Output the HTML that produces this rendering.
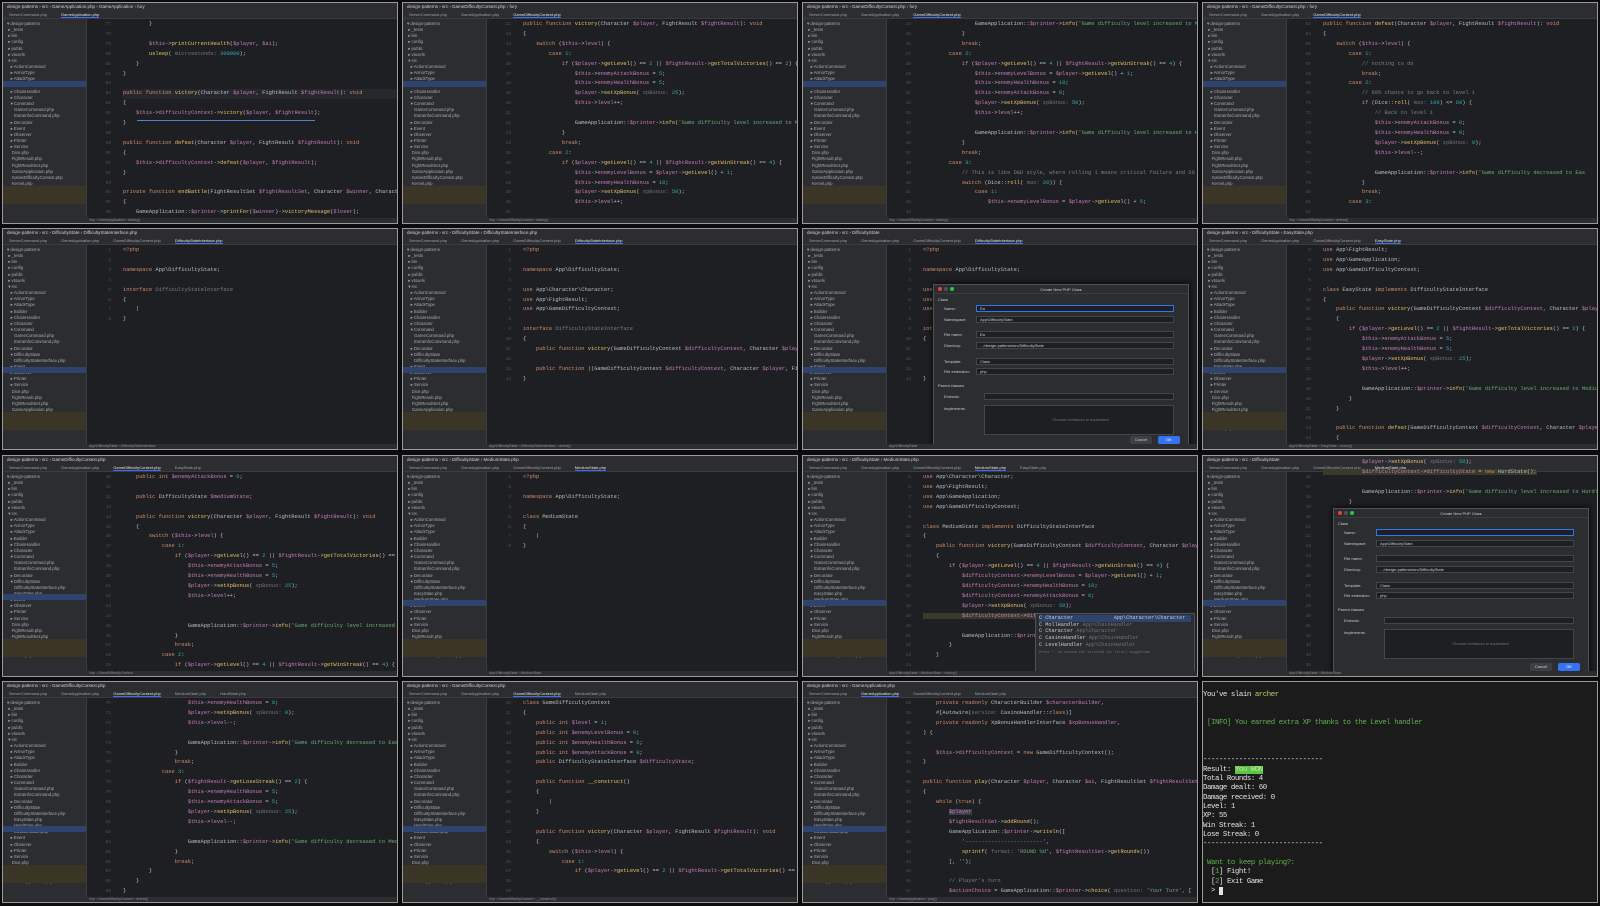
<!DOCTYPE html>
<html><head><meta charset="utf-8"><style>
*{margin:0;padding:0;box-sizing:border-box}
body{width:1600px;height:906px;background:#0c0c0c;position:relative;overflow:hidden;font-family:"Liberation Mono",monospace}
.cell{position:absolute;width:396px;height:222px;border:1px solid #9a9a9a;background:#1e1f22;overflow:hidden}
.tb{position:absolute;left:0;top:0;right:0;height:8px;background:#2b2d30;font:4.5px "Liberation Sans",sans-serif;color:#cfd1d6;padding:1px 0 0 4px;white-space:nowrap}
.tabs{position:absolute;left:0;top:8px;right:0;height:8px;background:#2b2d30;border-bottom:1px solid #393b40;font:4px "Liberation Sans",sans-serif;color:#9da0a8;white-space:nowrap;padding:1px 0 0 6px}
.tabs b{display:inline-block;font-weight:normal;margin-right:14px}
.tabs b.a{border-bottom:1px solid #3574f0;color:#dfe1e5}
.side{position:absolute;left:0;top:16px;width:84px;bottom:5px;background:#2b2d30;border-right:1px solid #393b40;overflow:hidden}
.side pre{font:4.3px/6.15px "Liberation Sans",sans-serif;color:#a9abb0;padding:2px 0 0 4px}
.side .sel{position:absolute;left:0;width:84px;height:6px;background:#2e436e}
.side .ex{position:absolute;left:0;width:84px;height:18px;bottom:14px;background:#3a3524}
.gut{position:absolute;left:86px;top:17px;width:22px;text-align:right}
.gut pre{font:4.5px/9.9px "Liberation Mono",monospace;color:#4e5157}
.ed{position:absolute;left:120px;top:17px;right:0;bottom:5px;overflow:hidden}
.ed pre{font:5.4px/9.9px "Liberation Mono",monospace;color:#bcbec4;white-space:pre}
.sb{position:absolute;left:0;right:0;bottom:0;height:5px;background:#2b2d30;font:3.5px "Liberation Sans",sans-serif;color:#8a8d93;padding-left:86px}
.k{color:#cf8e6d}.f{color:#e6c06b}.v{color:#c77dbb}.s{color:#6aab73}.c{color:#7a7e85}.n{color:#2aacb8}.h{color:#6f737a}
.hl{background:#26282e;display:inline-block;width:300px}
.dlg{position:absolute;background:#2b2d30;border:1px solid #4e5157;box-shadow:0 0 6px #000;font:4px "Liberation Sans",sans-serif;color:#c9cbd0}
.dlg .t{height:9px;text-align:center;line-height:9px;border-bottom:1px solid #393b40}
.dlg .dot{position:absolute;top:2px;width:4px;height:4px;border-radius:2px}
.dlg .row{position:absolute;left:8px;right:8px;height:7px}
.dlg .row i{font-style:normal;position:absolute;left:2px;top:1px}
.dlg .row u{text-decoration:none;position:absolute;left:34px;right:6px;top:0;height:7px;background:#1e1f22;border:1px solid #43454a;padding-left:3px;line-height:6px}
.btn{position:absolute;bottom:4px;height:8px;width:22px;border-radius:2px;text-align:center;line-height:8px}
.term{background:#1b1b1b}
.term pre{position:absolute;left:0;top:9px;font:7.4px/9.33px "Liberation Mono",monospace;letter-spacing:-0.45px;color:#e4e4e4}
</style></head><body>

<!-- ROW 1 -->
<div class="cell" style="left:2px;top:2px">
<div class="tb">design-patterns › src › GameApplication.php › GameApplication › fury</div>
<div class="tabs"><b>ServerCommand.php</b><b class="a">GameApplication.php</b></div>
<div class="side"><div class="sel" style="top:62px"></div><div class="ex"></div><pre>▾ design-patterns
 ▸ _tests
 ▸ bin
 ▸ config
 ▸ public
 ▸ vtoxels
 ▾ src
   ▸ ActionCommand
   ▸ ArmorType
   ▸ AttackType
   ▸ Builder
   ▸ ChainHandler
   ▸ Character
   ▾ Command
      GameCommand.php
      ExtraInfoCommand.php
   ▸ Decorator
   ▸ Event
   ▸ Observer
   ▸ Printer
   ▸ Service
    Dice.php
    FightResult.php
    FightResultSet.php
    GameApplication.php
    GameDifficultyContext.php
    Kernel.php
 ▸ tutorial
 ▸ var
 ▸ vendor
</pre></div>
<div class="gut"><pre>77
78
79
80
81
82
83
84
85
86
87
88
89
90
91
92
93
94
95
96</pre></div>
<div class="ed"><pre>        }

        <span class="v">$this</span>-><span class="f">printCurrentHealth</span>(<span class="v">$player</span>, <span class="v">$ai</span>);
        <span class="f">usleep</span>( <span class="h">microseconds:</span> <span class="n">300000</span>);
    }
}

<span class="hl"><span class="k">public function</span> <span class="f">victory</span>(Character <span class="v">$player</span>, FightResult <span class="v">$fightResult</span>): <span class="k">void</span></span>
{
    <span class="v">$this</span>-><span class="v">difficultyContext</span>-><span class="f">victory</span>(<span class="v">$player</span>, <span class="v">$fightResult</span>);
}

<span class="k">public function</span> <span class="f">defeat</span>(Character <span class="v">$player</span>, FightResult <span class="v">$fightResult</span>): <span class="k">void</span>
{
    <span class="v">$this</span>-><span class="v">difficultyContext</span>-><span class="f">defeat</span>(<span class="v">$player</span>, <span class="v">$fightResult</span>);
}

<span class="k">private function</span> <span class="f">endBattle</span>(FightResultSet <span class="v">$fightResultSet</span>, Character <span class="v">$winner</span>, Character
{
    GameApplication::<span class="v">$printer</span>-><span class="f">printFor</span>(<span class="v">$winner</span>)-><span class="f">victoryMessage</span>(<span class="v">$loser</span>);</pre>
<div style="position:absolute;left:14px;top:100px;width:178px;height:1px;background:#5a7fd0"></div></div>
<div class="sb">Vop › GameApplication › victory()</div>
</div>

<div class="cell" style="left:402px;top:2px">
<div class="tb">design-patterns › src › GameDifficultyContext.php › fury</div>
<div class="tabs"><b>ServerCommand.php</b><b>GameApplication.php</b><b class="a">GameDifficultyContext.php</b></div>
<div class="side"><div class="sel" style="top:62px"></div><div class="ex"></div><pre>▾ design-patterns
 ▸ _tests
 ▸ bin
 ▸ config
 ▸ public
 ▸ vtoxels
 ▾ src
   ▸ ActionCommand
   ▸ ArmorType
   ▸ AttackType
   ▸ Builder
   ▸ ChainHandler
   ▸ Character
   ▾ Command
      GameCommand.php
      ExtraInfoCommand.php
   ▸ Decorator
   ▸ Event
   ▸ Observer
   ▸ Printer
   ▸ Service
    Dice.php
    FightResult.php
    FightResultSet.php
    GameApplication.php
    GameDifficultyContext.php
    Kernel.php
 ▸ tutorial
 ▸ var
 ▸ vendor
</pre></div>
<div class="gut"><pre>12
13
14
15
16
17
18
19
20
21
22
23
24
25
26
27
28
29
30
31</pre></div>
<div class="ed"><pre><span class="k">public function</span> <span class="f">victory</span>(Character <span class="v">$player</span>, FightResult <span class="v">$fightResult</span>): <span class="k">void</span>
{
    <span class="k">switch</span> (<span class="v">$this</span>-><span class="v">level</span>) {
        <span class="k">case</span> <span class="n">1</span>:
            <span class="k">if</span> (<span class="v">$player</span>-><span class="f">getLevel</span>() == <span class="n">2</span> || <span class="v">$fightResult</span>-><span class="f">getTotalVictories</span>() == <span class="n">2</span>) {
                <span class="v">$this</span>-><span class="v">enemyAttackBonus</span> = <span class="n">5</span>;
                <span class="v">$this</span>-><span class="v">enemyHealthBonus</span> = <span class="n">5</span>;
                <span class="v">$player</span>-><span class="f">setXpBonus</span>( <span class="h">xpBonus:</span> <span class="n">25</span>);
                <span class="v">$this</span>-><span class="v">level</span>++;

                GameApplication::<span class="v">$printer</span>-><span class="f">info</span>(<span class="s">'Game difficulty level increased to Med</span>
            }
            <span class="k">break</span>;
        <span class="k">case</span> <span class="n">2</span>:
            <span class="k">if</span> (<span class="v">$player</span>-><span class="f">getLevel</span>() == <span class="n">4</span> || <span class="v">$fightResult</span>-><span class="f">getWinStreak</span>() == <span class="n">4</span>) {
                <span class="v">$this</span>-><span class="v">enemyLevelBonus</span> = <span class="v">$player</span>-><span class="f">getLevel</span>() + <span class="n">1</span>;
                <span class="v">$this</span>-><span class="v">enemyHealthBonus</span> = <span class="n">10</span>;
                <span class="v">$player</span>-><span class="f">setXpBonus</span>( <span class="h">xpBonus:</span> <span class="n">50</span>);
                <span class="v">$this</span>-><span class="v">level</span>++;</pre></div>
<div class="sb">Vop › GameDifficultyContext › victory()</div>
</div>

<div class="cell" style="left:802px;top:2px">
<div class="tb">design-patterns › src › GameDifficultyContext.php › fury</div>
<div class="tabs"><b>ServerCommand.php</b><b>GameApplication.php</b><b class="a">GameDifficultyContext.php</b></div>
<div class="side"><div class="sel" style="top:62px"></div><div class="ex"></div><pre>▾ design-patterns
 ▸ _tests
 ▸ bin
 ▸ config
 ▸ public
 ▸ vtoxels
 ▾ src
   ▸ ActionCommand
   ▸ ArmorType
   ▸ AttackType
   ▸ Builder
   ▸ ChainHandler
   ▸ Character
   ▾ Command
      GameCommand.php
      ExtraInfoCommand.php
   ▸ Decorator
   ▸ Event
   ▸ Observer
   ▸ Printer
   ▸ Service
    Dice.php
    FightResult.php
    FightResultSet.php
    GameApplication.php
    GameDifficultyContext.php
    Kernel.php
 ▸ tutorial
 ▸ var
 ▸ vendor
</pre></div>
<div class="gut"><pre>24
25
26
27
28
29
30
31
32
33
34
35
36
37
38
39
40
41
42
43</pre></div>
<div class="ed"><pre>                GameApplication::<span class="v">$printer</span>-><span class="f">info</span>(<span class="s">'Game difficulty level increased to Med</span>
            }
            <span class="k">break</span>;
        <span class="k">case</span> <span class="n">2</span>:
            <span class="k">if</span> (<span class="v">$player</span>-><span class="f">getLevel</span>() == <span class="n">4</span> || <span class="v">$fightResult</span>-><span class="f">getWinStreak</span>() == <span class="n">4</span>) {
                <span class="v">$this</span>-><span class="v">enemyLevelBonus</span> = <span class="v">$player</span>-><span class="f">getLevel</span>() + <span class="n">1</span>;
                <span class="v">$this</span>-><span class="v">enemyHealthBonus</span> = <span class="n">10</span>;
                <span class="v">$this</span>-><span class="v">enemyAttackBonus</span> = <span class="n">8</span>;
                <span class="v">$player</span>-><span class="f">setXpBonus</span>( <span class="h">xpBonus:</span> <span class="n">50</span>);
                <span class="v">$this</span>-><span class="v">level</span>++;

                GameApplication::<span class="v">$printer</span>-><span class="f">info</span>(<span class="s">'Game difficulty level increased to Har</span>
            }
            <span class="k">break</span>;
        <span class="k">case</span> <span class="n">3</span>:
            <span class="c">// This is like D&amp;D style, where rolling 1 means critical failure and 20 bu</span>
            <span class="k">switch</span> (Dice::<span class="f">roll</span>( <span class="h">max:</span> <span class="n">20</span>)) {
                <span class="k">case</span> <span class="n">1</span>:
                    <span class="v">$this</span>-><span class="v">enemyLevelBonus</span> = <span class="v">$player</span>-><span class="f">getLevel</span>() + <span class="n">5</span>;</pre></div>
<div class="sb">Vop › GameDifficultyContext › victory()</div>
</div>

<div class="cell" style="left:1202px;top:2px">
<div class="tb">design-patterns › src › GameDifficultyContext.php › fury</div>
<div class="tabs"><b>ServerCommand.php</b><b>GameApplication.php</b><b class="a">GameDifficultyContext.php</b></div>
<div class="side"><div class="sel" style="top:62px"></div><div class="ex"></div><pre>▾ design-patterns
 ▸ _tests
 ▸ bin
 ▸ config
 ▸ public
 ▸ vtoxels
 ▾ src
   ▸ ActionCommand
   ▸ ArmorType
   ▸ AttackType
   ▸ Builder
   ▸ ChainHandler
   ▸ Character
   ▾ Command
      GameCommand.php
      ExtraInfoCommand.php
   ▸ Decorator
   ▸ Event
   ▸ Observer
   ▸ Printer
   ▸ Service
    Dice.php
    FightResult.php
    FightResultSet.php
    GameApplication.php
    GameDifficultyContext.php
    Kernel.php
 ▸ tutorial
 ▸ var
 ▸ vendor
</pre></div>
<div class="gut"><pre>63
64
65
66
67
68
69
70
71
72
73
74
75
76
77
78
79
80
81
82</pre></div>
<div class="ed"><pre><span class="k">public function</span> <span class="f">defeat</span>(Character <span class="v">$player</span>, FightResult <span class="v">$fightResult</span>): <span class="k">void</span>
{
    <span class="k">switch</span> (<span class="v">$this</span>-><span class="v">level</span>) {
        <span class="k">case</span> <span class="n">1</span>:
            <span class="c">// nothing to do</span>
            <span class="k">break</span>;
        <span class="k">case</span> <span class="n">2</span>:
            <span class="c">// 60% chance to go back to level 1</span>
            <span class="k">if</span> (Dice::<span class="f">roll</span>( <span class="h">max:</span> <span class="n">100</span>) &lt;= <span class="n">60</span>) {
                <span class="c">// Back to level 1</span>
                <span class="v">$this</span>-><span class="v">enemyAttackBonus</span> = <span class="n">0</span>;
                <span class="v">$this</span>-><span class="v">enemyHealthBonus</span> = <span class="n">0</span>;
                <span class="v">$player</span>-><span class="f">setXpBonus</span>( <span class="h">xpBonus:</span> <span class="n">0</span>);
                <span class="v">$this</span>-><span class="v">level</span>--;

                GameApplication::<span class="v">$printer</span>-><span class="f">info</span>(<span class="s">'Game difficulty decreased to Eas</span>
            }
            <span class="k">break</span>;
        <span class="k">case</span> <span class="n">3</span>:</pre></div>
<div class="sb">Vop › GameDifficultyContext › defeat()</div>
</div>

<!-- ROW 2 -->
<div class="cell" style="left:2px;top:228px">
<div class="tb">design-patterns › src › DifficultyState › DifficultyStateInterface.php</div>
<div class="tabs"><b>ServerCommand.php</b><b>GameApplication.php</b><b>GameDifficultyContext.php</b><b class="a">DifficultyStateInterface.php</b></div>
<div class="side"><div class="sel" style="top:122px"></div><div class="ex"></div><pre>▾ design-patterns
 ▸ _tests
 ▸ bin
 ▸ config
 ▸ public
 ▸ vtoxels
 ▾ src
   ▸ ActionCommand
   ▸ ArmorType
   ▸ AttackType
   ▸ Builder
   ▸ ChainHandler
   ▸ Character
   ▾ Command
      GameCommand.php
      ExtraInfoCommand.php
   ▸ Decorator
   ▾ DifficultyState
      DifficultyStateInterface.php
   ▸ Event
   ▸ Observer
   ▸ Printer
   ▸ Service
    Dice.php
    FightResult.php
    FightResultSet.php
    GameApplication.php
    GameDifficultyContext.php
    Kernel.php
 ▸ tutorial
</pre></div>
<div class="gut"><pre>1
2
3
4
5
6
7
8</pre></div>
<div class="ed"><pre><span class="k">&lt;?php</span>

<span class="k">namespace</span> App\DifficultyState;

<span class="k">interface</span> <span class="c">DifficultyStateInterface</span>
{
    |
}</pre></div>
<div class="sb">App\DifficultyState › DifficultyStateInterface</div>
</div>

<div class="cell" style="left:402px;top:228px">
<div class="tb">design-patterns › src › DifficultyState › DifficultyStateInterface.php</div>
<div class="tabs"><b>ServerCommand.php</b><b>GameApplication.php</b><b>GameDifficultyContext.php</b><b class="a">DifficultyStateInterface.php</b></div>
<div class="side"><div class="sel" style="top:122px"></div><div class="ex"></div><pre>▾ design-patterns
 ▸ _tests
 ▸ bin
 ▸ config
 ▸ public
 ▸ vtoxels
 ▾ src
   ▸ ActionCommand
   ▸ ArmorType
   ▸ AttackType
   ▸ Builder
   ▸ ChainHandler
   ▸ Character
   ▾ Command
      GameCommand.php
      ExtraInfoCommand.php
   ▸ Decorator
   ▾ DifficultyState
      DifficultyStateInterface.php
   ▸ Event
   ▸ Observer
   ▸ Printer
   ▸ Service
    Dice.php
    FightResult.php
    FightResultSet.php
    GameApplication.php
    GameDifficultyContext.php
    Kernel.php
 ▸ tutorial
</pre></div>
<div class="gut"><pre>1
2
3
4
5
6
7
8
9
10
11
12
13
14</pre></div>
<div class="ed"><pre><span class="k">&lt;?php</span>

<span class="k">namespace</span> App\DifficultyState;

<span class="k">use</span> App\Character\Character;
<span class="k">use</span> App\FightResult;
<span class="k">use</span> App\GameDifficultyContext;

<span class="k">interface</span> <span class="c">DifficultyStateInterface</span>
{
    <span class="k">public function</span> <span class="f">victory</span>(GameDifficultyContext <span class="v">$difficultyContext</span>, Character <span class="v">$player</span>, FightResu

    <span class="k">public function</span> |(GameDifficultyContext <span class="v">$difficultyContext</span>, Character <span class="v">$player</span>, FightResul
}</pre></div>
<div class="sb">App\DifficultyState › DifficultyStateInterface › defeat()</div>
</div>

<div class="cell" style="left:802px;top:228px">
<div class="tb">design-patterns › src › DifficultyState</div>
<div class="tabs"><b>ServerCommand.php</b><b>GameApplication.php</b><b>GameDifficultyContext.php</b><b class="a">DifficultyStateInterface.php</b></div>
<div class="side"><div class="sel" style="top:122px"></div><div class="ex"></div><pre>▾ design-patterns
 ▸ _tests
 ▸ bin
 ▸ config
 ▸ public
 ▸ vtoxels
 ▾ src
   ▸ ActionCommand
   ▸ ArmorType
   ▸ AttackType
   ▸ Builder
   ▸ ChainHandler
   ▸ Character
   ▾ Command
      GameCommand.php
      ExtraInfoCommand.php
   ▸ Decorator
   ▾ DifficultyState
      DifficultyStateInterface.php
   ▸ Event
   ▸ Observer
   ▸ Printer
   ▸ Service
    Dice.php
    FightResult.php
    FightResultSet.php
    GameApplication.php
    GameDifficultyContext.php
    Kernel.php
 ▸ tutorial
</pre></div>
<div class="gut"><pre>1
2
3
4
5
6
7
8
9
10
11
12
13
14</pre></div>
<div class="ed"><pre><span class="k">&lt;?php</span>

<span class="k">namespace</span> App\DifficultyState;

<span class="k">use</span> App\Character\Character;
<span class="k">use</span> App\FightResult;
<span class="k">use</span> App\GameDifficultyContext;

<span class="k">interface</span> DifficultyStateInterface
{
    <span class="k">public function</span> <span class="f">victory</span>(...

    <span class="k">public function</span> <span class="f">defeat</span>(...
}</pre></div>
<div class="dlg" style="left:130px;top:55px;width:256px;height:165px">
<div class="dot" style="left:4px;background:#e0443e"></div><div class="dot" style="left:10px;background:#4e5157"></div><div class="dot" style="left:16px;background:#28c840"></div>
<div class="t">Create New PHP Class</div>
<div style="position:absolute;left:4px;top:12px">Class</div>
<div class="row" style="top:20px"><i>Name:</i><u style="border-color:#3574f0">Ea</u></div>
<div class="row" style="top:31px"><i>Namespace:</i><u>App\DifficultyState</u></div>
<div class="row" style="top:46px"><i>File name:</i><u>Ea</u></div>
<div class="row" style="top:57px"><i>Directory:</i><u>.../design-patterns/src/DifficultyState</u></div>
<div class="row" style="top:73px"><i>Template:</i><u>Class</u></div>
<div class="row" style="top:83px"><i>File extension:</i><u>php</u></div>
<div style="position:absolute;left:4px;top:98px">Parent classes</div>
<div class="row" style="top:108px"><i>Extends:</i><u style="left:42px"></u></div>
<div class="row" style="top:120px"><i>Implements:</i><u style="left:42px;height:30px;text-align:center;line-height:28px;color:#6f737a">Choose interfaces to implement</u></div>
<div class="btn" style="right:36px;background:#3c3f44">Cancel</div><div class="btn" style="right:8px;background:#3574f0;color:#fff">OK</div>
</div>
<div class="sb">App\DifficultyState</div>
</div>

<div class="cell" style="left:1202px;top:228px">
<div class="tb">design-patterns › src › DifficultyState › EasyState.php</div>
<div class="tabs"><b>ServerCommand.php</b><b>GameApplication.php</b><b>GameDifficultyContext.php</b><b class="a">EasyState.php</b></div>
<div class="side"><div class="sel" style="top:122px"></div><div class="ex"></div><pre>▾ design-patterns
 ▸ _tests
 ▸ bin
 ▸ config
 ▸ public
 ▸ vtoxels
 ▾ src
   ▸ ActionCommand
   ▸ ArmorType
   ▸ AttackType
   ▸ Builder
   ▸ ChainHandler
   ▸ Character
   ▾ Command
      GameCommand.php
      ExtraInfoCommand.php
   ▸ Decorator
   ▾ DifficultyState
      DifficultyStateInterface.php
      EasyState.php
   ▸ Event
   ▸ Observer
   ▸ Printer
   ▸ Service
    Dice.php
    FightResult.php
    FightResultSet.php
    GameApplication.php
    GameDifficultyContext.php
    Kernel.php
</pre></div>
<div class="gut"><pre>5
6
7
8
9
10
11
12
13
14
15
16
17
18
19
20
21
22
23
24</pre></div>
<div class="ed"><pre><span class="k">use</span> App\FightResult;
<span class="k">use</span> App\GameApplication;
<span class="k">use</span> App\GameDifficultyContext;

<span class="k">class</span> EasyState <span class="k">implements</span> DifficultyStateInterface
{
    <span class="k">public function</span> <span class="f">victory</span>(GameDifficultyContext <span class="v">$difficultyContext</span>, Character <span class="v">$player</span>, Fi
    {
        <span class="k">if</span> (<span class="v">$player</span>-><span class="f">getLevel</span>() == <span class="n">2</span> || <span class="v">$fightResult</span>-><span class="f">getTotalVictories</span>() == <span class="n">2</span>) {
            <span class="v">$this</span>-><span class="v">enemyAttackBonus</span> = <span class="n">5</span>;
            <span class="v">$this</span>-><span class="v">enemyHealthBonus</span> = <span class="n">5</span>;
            <span class="v">$player</span>-><span class="f">setXpBonus</span>( <span class="h">xpBonus:</span> <span class="n">25</span>);
            <span class="v">$this</span>-><span class="v">level</span>++;

            GameApplication::<span class="v">$printer</span>-><span class="f">info</span>(<span class="s">'Game difficulty level increased to Medium!'</span>);
        }
    }

    <span class="k">public function</span> <span class="f">defeat</span>(GameDifficultyContext <span class="v">$difficultyContext</span>, Character <span class="v">$player</span>, F
    {</pre></div>
<div class="sb">App\DifficultyState › EasyState › victory()</div>
</div>

<!-- ROW 3 -->
<div class="cell" style="left:2px;top:455px">
<div class="tb">design-patterns › src › GameDifficultyContext.php</div>
<div class="tabs"><b>ServerCommand.php</b><b>GameApplication.php</b><b class="a">GameDifficultyContext.php</b><b>EasyState.php</b></div>
<div class="side"><div class="sel" style="top:122px"></div><div class="ex"></div><pre>▾ design-patterns
 ▸ _tests
 ▸ bin
 ▸ config
 ▸ public
 ▸ vtoxels
 ▾ src
   ▸ ActionCommand
   ▸ ArmorType
   ▸ AttackType
   ▸ Builder
   ▸ ChainHandler
   ▸ Character
   ▾ Command
      GameCommand.php
      ExtraInfoCommand.php
   ▸ Decorator
   ▾ DifficultyState
      DifficultyStateInterface.php
      EasyState.php
   ▸ Event
   ▸ Observer
   ▸ Printer
   ▸ Service
    Dice.php
    FightResult.php
    FightResultSet.php
    GameApplication.php
    GameDifficultyContext.php
    Kernel.php
</pre></div>
<div class="gut"><pre>10
11
12
13
14
15
16
17
18
19
20
21
22
23
24
25
26
27
28
29</pre></div>
<div class="ed"><pre>    <span class="k">public int</span> <span class="v">$enemyAttackBonus</span> = <span class="n">0</span>;

    <span class="k">public</span> DifficultyState <span class="v">$mediumState</span>;

    <span class="k">public function</span> <span class="f">victory</span>(Character <span class="v">$player</span>, FightResult <span class="v">$fightResult</span>): <span class="k">void</span>
    {
        <span class="k">switch</span> (<span class="v">$this</span>-><span class="v">level</span>) {
            <span class="k">case</span> <span class="n">1</span>:
                <span class="k">if</span> (<span class="v">$player</span>-><span class="f">getLevel</span>() == <span class="n">2</span> || <span class="v">$fightResult</span>-><span class="f">getTotalVictories</span>() == <span class="n">2</span>) {
                    <span class="v">$this</span>-><span class="v">enemyAttackBonus</span> = <span class="n">5</span>;
                    <span class="v">$this</span>-><span class="v">enemyHealthBonus</span> = <span class="n">5</span>;
                    <span class="v">$player</span>-><span class="f">setXpBonus</span>( <span class="h">xpBonus:</span> <span class="n">25</span>);
                    <span class="v">$this</span>-><span class="v">level</span>++;


                    GameApplication::<span class="v">$printer</span>-><span class="f">info</span>(<span class="s">'Game difficulty level increased to Med</span>
                }
                <span class="k">break</span>;
            <span class="k">case</span> <span class="n">2</span>:
                <span class="k">if</span> (<span class="v">$player</span>-><span class="f">getLevel</span>() == <span class="n">4</span> || <span class="v">$fightResult</span>-><span class="f">getWinStreak</span>() == <span class="n">4</span>) {
                    <span class="v">$this</span>-><span class="v">enemyLevelBonus</span> = <span class="v">$player</span>-><span class="f">getLevel</span>() + <span class="n">1</span>;</pre></div>
<div class="sb">Vop › GameDifficultyContext</div>
</div>

<div class="cell" style="left:402px;top:455px">
<div class="tb">design-patterns › src › DifficultyState › MediumState.php</div>
<div class="tabs"><b>ServerCommand.php</b><b>GameApplication.php</b><b>GameDifficultyContext.php</b><b class="a">MediumState.php</b></div>
<div class="side"><div class="sel" style="top:128px"></div><div class="ex"></div><pre>▾ design-patterns
 ▸ _tests
 ▸ bin
 ▸ config
 ▸ public
 ▸ vtoxels
 ▾ src
   ▸ ActionCommand
   ▸ ArmorType
   ▸ AttackType
   ▸ Builder
   ▸ ChainHandler
   ▸ Character
   ▾ Command
      GameCommand.php
      ExtraInfoCommand.php
   ▸ Decorator
   ▾ DifficultyState
      DifficultyStateInterface.php
      EasyState.php
      MediumState.php
   ▸ Event
   ▸ Observer
   ▸ Printer
   ▸ Service
    Dice.php
    FightResult.php
    FightResultSet.php
    GameApplication.php
    GameDifficultyContext.php
</pre></div>
<div class="gut"><pre>1
2
3
4
5
6
7
8</pre></div>
<div class="ed"><pre><span class="k">&lt;?php</span>

<span class="k">namespace</span> App\DifficultyState;

<span class="k">class</span> MediumState
{
    |
}</pre></div>
<div class="sb">App\DifficultyState › MediumState</div>
</div>

<div class="cell" style="left:802px;top:455px">
<div class="tb">design-patterns › src › DifficultyState › MediumState.php</div>
<div class="tabs"><b>ServerCommand.php</b><b>GameApplication.php</b><b>GameDifficultyContext.php</b><b class="a">MediumState.php</b><b>EasyState.php</b></div>
<div class="side"><div class="sel" style="top:128px"></div><div class="ex"></div><pre>▾ design-patterns
 ▸ _tests
 ▸ bin
 ▸ config
 ▸ public
 ▸ vtoxels
 ▾ src
   ▸ ActionCommand
   ▸ ArmorType
   ▸ AttackType
   ▸ Builder
   ▸ ChainHandler
   ▸ Character
   ▾ Command
      GameCommand.php
      ExtraInfoCommand.php
   ▸ Decorator
   ▾ DifficultyState
      DifficultyStateInterface.php
      EasyState.php
      MediumState.php
   ▸ Event
   ▸ Observer
   ▸ Printer
   ▸ Service
    Dice.php
    FightResult.php
    FightResultSet.php
    GameApplication.php
    GameDifficultyContext.php
</pre></div>
<div class="gut"><pre>5
6
7
8
9
10
11
12
13
14
15
16
17
18
19
20
21
22
23
24</pre></div>
<div class="ed"><pre><span class="k">use</span> App\Character\Character;
<span class="k">use</span> App\FightResult;
<span class="k">use</span> App\GameApplication;
<span class="k">use</span> App\GameDifficultyContext;

<span class="k">class</span> MediumState <span class="k">implements</span> DifficultyStateInterface
{
    <span class="k">public function</span> <span class="f">victory</span>(GameDifficultyContext <span class="v">$difficultyContext</span>, Character <span class="v">$player</span>, Fi
    {
        <span class="k">if</span> (<span class="v">$player</span>-><span class="f">getLevel</span>() == <span class="n">4</span> || <span class="v">$fightResult</span>-><span class="f">getWinStreak</span>() == <span class="n">4</span>) {
            <span class="v">$difficultyContext</span>-><span class="v">enemyLevelBonus</span> = <span class="v">$player</span>-><span class="f">getLevel</span>() + <span class="n">1</span>;
            <span class="v">$difficultyContext</span>-><span class="v">enemyHealthBonus</span> = <span class="n">10</span>;
            <span class="v">$difficultyContext</span>-><span class="v">enemyAttackBonus</span> = <span class="n">8</span>;
            <span class="v">$player</span>-><span class="f">setXpBonus</span>( <span class="h">xpBonus:</span> <span class="n">50</span>);
<span style="background:#3a3a2c">            <span class="v">$difficultyContext</span>-><span class="v">difficultyState</span> = <span class="k">new</span> Me</span>

            GameApplication::<span class="v">$printer</span>-><span class="f">info</span>(
        }
    }</pre></div>
<div style="position:absolute;left:232px;top:157px;width:160px;height:60px;background:#2b2d30;border:1px solid #4e5157;font:5.2px/6.7px 'Liberation Mono',monospace;color:#c9cbd0;padding:1px 3px;white-space:pre"><span style="background:#2e436e;display:block">C Character             App\Character\Character</span>C MollHandler <span class="h">App\ChainHandler</span>
C Character <span class="h">App\Character</span>
C CasinoHandler <span class="h">App\ChainHandler</span>
C LevelHandler <span class="h">App\ChainHandler</span>
<span class="h" style="font-size:3.5px">Press ^. to choose the selected (or first) suggestion</span></div>
<div class="sb">App\DifficultyState › MediumState › victory()</div>
</div>

<div class="cell" style="left:1202px;top:455px">
<div class="tb">design-patterns › src › DifficultyState</div>
<div class="tabs"><b>ServerCommand.php</b><b>GameApplication.php</b><b>GameDifficultyContext.php</b><b class="a">MediumState.php</b></div>
<div class="side"><div class="sel" style="top:128px"></div><div class="ex"></div><pre>▾ design-patterns
 ▸ _tests
 ▸ bin
 ▸ config
 ▸ public
 ▸ vtoxels
 ▾ src
   ▸ ActionCommand
   ▸ ArmorType
   ▸ AttackType
   ▸ Builder
   ▸ ChainHandler
   ▸ Character
   ▾ Command
      GameCommand.php
      ExtraInfoCommand.php
   ▸ Decorator
   ▾ DifficultyState
      DifficultyStateInterface.php
      EasyState.php
      MediumState.php
   ▸ Event
   ▸ Observer
   ▸ Printer
   ▸ Service
    Dice.php
    FightResult.php
    FightResultSet.php
    GameApplication.php
    GameDifficultyContext.php
</pre></div>
<div class="gut"><pre>16
17
18
19
20
21
22
23
24
25
26
27
28
29
30
31
32
33
34
35</pre></div>
<div class="ed" style="top:2px"><pre>            <span class="v">$player</span>-><span class="f">setXpBonus</span>( <span class="h">xpBonus:</span> <span class="n">50</span>);
<span style="background:#3a3a2c">            <span class="v">$difficultyContext</span>-><span class="v">difficultyState</span> = <span class="k">new</span> HardState();</span>

            GameApplication::<span class="v">$printer</span>-><span class="f">info</span>(<span class="s">'Game difficulty level increased to Hard!'</span>);
        }
    }

    <span class="k">public function</span> <span class="f">defeat</span>(...
    {
    }</pre></div>
<div class="dlg" style="left:130px;top:52px;width:256px;height:168px">
<div class="dot" style="left:4px;background:#e0443e"></div><div class="dot" style="left:10px;background:#4e5157"></div><div class="dot" style="left:16px;background:#28c840"></div>
<div class="t">Create New PHP Class</div>
<div style="position:absolute;left:4px;top:12px">Class</div>
<div class="row" style="top:20px"><i>Name:</i><u style="border-color:#3574f0"></u></div>
<div class="row" style="top:31px"><i>Namespace:</i><u>App\DifficultyState</u></div>
<div class="row" style="top:46px"><i>File name:</i><u></u></div>
<div class="row" style="top:57px"><i>Directory:</i><u>.../design-patterns/src/DifficultyState</u></div>
<div class="row" style="top:73px"><i>Template:</i><u>Class</u></div>
<div class="row" style="top:83px"><i>File extension:</i><u>php</u></div>
<div style="position:absolute;left:4px;top:98px">Parent classes</div>
<div class="row" style="top:108px"><i>Extends:</i><u style="left:42px"></u></div>
<div class="row" style="top:120px"><i>Implements:</i><u style="left:42px;height:30px;text-align:center;line-height:28px;color:#6f737a">Choose interfaces to implement</u></div>
<div class="btn" style="right:36px;background:#3c3f44">Cancel</div><div class="btn" style="right:8px;background:#3574f0;color:#fff">OK</div>
</div>
<div class="sb">App\DifficultyState › MediumState</div>
</div>

<!-- ROW 4 -->
<div class="cell" style="left:2px;top:681px">
<div class="tb">design-patterns › src › GameDifficultyContext.php</div>
<div class="tabs"><b>ServerCommand.php</b><b>GameApplication.php</b><b class="a">GameDifficultyContext.php</b><b>MediumState.php</b><b>HardState.php</b></div>
<div class="side"><div class="sel" style="top:128px"></div><div class="ex"></div><pre>▾ design-patterns
 ▸ _tests
 ▸ bin
 ▸ config
 ▸ public
 ▸ vtoxels
 ▾ src
   ▸ ActionCommand
   ▸ ArmorType
   ▸ AttackType
   ▸ Builder
   ▸ ChainHandler
   ▸ Character
   ▾ Command
      GameCommand.php
      ExtraInfoCommand.php
   ▸ Decorator
   ▾ DifficultyState
      DifficultyStateInterface.php
      EasyState.php
      HardState.php
      MediumState.php
   ▸ Event
   ▸ Observer
   ▸ Printer
   ▸ Service
    Dice.php
    FightResult.php
    FightResultSet.php
    GameApplication.php
</pre></div>
<div class="gut"><pre>70
71
72
73
74
75
76
77
78
79
80
81
82
83
84
85
86
87
88
89</pre></div>
<div class="ed"><pre>                    <span class="v">$this</span>-><span class="v">enemyHealthBonus</span> = <span class="n">0</span>;
                    <span class="v">$player</span>-><span class="f">setXpBonus</span>( <span class="h">xpBonus:</span> <span class="n">0</span>);
                    <span class="v">$this</span>-><span class="v">level</span>--;

                    GameApplication::<span class="v">$printer</span>-><span class="f">info</span>(<span class="s">'Game difficulty decreased to Eas</span>
                }
                <span class="k">break</span>;
            <span class="k">case</span> <span class="n">3</span>:
                <span class="k">if</span> (<span class="v">$fightResult</span>-><span class="f">getLoseStreak</span>() == <span class="n">2</span>) {
                    <span class="v">$this</span>-><span class="v">enemyHealthBonus</span> = <span class="n">5</span>;
                    <span class="v">$this</span>-><span class="v">enemyAttackBonus</span> = <span class="n">5</span>;
                    <span class="v">$player</span>-><span class="f">setXpBonus</span>( <span class="h">xpBonus:</span> <span class="n">25</span>);
                    <span class="v">$this</span>-><span class="v">level</span>--;

                    GameApplication::<span class="v">$printer</span>-><span class="f">info</span>(<span class="s">'Game difficulty decreased to Medi</span>
                }
                <span class="k">break</span>;
        }
    }
}</pre></div>
<div class="sb">Vop › GameDifficultyContext › defeat()</div>
</div>

<div class="cell" style="left:402px;top:681px">
<div class="tb">design-patterns › src › GameDifficultyContext.php</div>
<div class="tabs"><b>ServerCommand.php</b><b>GameApplication.php</b><b class="a">GameDifficultyContext.php</b><b>MediumState.php</b></div>
<div class="side"><div class="sel" style="top:128px"></div><div class="ex"></div><pre>▾ design-patterns
 ▸ _tests
 ▸ bin
 ▸ config
 ▸ public
 ▸ vtoxels
 ▾ src
   ▸ ActionCommand
   ▸ ArmorType
   ▸ AttackType
   ▸ Builder
   ▸ ChainHandler
   ▸ Character
   ▾ Command
      GameCommand.php
      ExtraInfoCommand.php
   ▸ Decorator
   ▾ DifficultyState
      DifficultyStateInterface.php
      EasyState.php
      HardState.php
      MediumState.php
   ▸ Event
   ▸ Observer
   ▸ Printer
   ▸ Service
    Dice.php
    FightResult.php
    FightResultSet.php
    GameApplication.php
</pre></div>
<div class="gut"><pre>10
11
12
13
14
15
16
17
18
19
20
21
22
23
24
25
26
27
28
29</pre></div>
<div class="ed"><pre><span class="k">class</span> GameDifficultyContext
{
    <span class="k">public int</span> <span class="v">$level</span> = <span class="n">1</span>;
    <span class="k">public int</span> <span class="v">$enemyLevelBonus</span> = <span class="n">0</span>;
    <span class="k">public int</span> <span class="v">$enemyHealthBonus</span> = <span class="n">0</span>;
    <span class="k">public int</span> <span class="v">$enemyAttackBonus</span> = <span class="n">0</span>;
    <span class="k">public</span> DifficultyStateInterface <span class="v">$difficultyState</span>;

    <span class="k">public function</span> <span class="f">__construct</span>()
    {
        |
    }

    <span class="k">public function</span> <span class="f">victory</span>(Character <span class="v">$player</span>, FightResult <span class="v">$fightResult</span>): <span class="k">void</span>
    {
        <span class="k">switch</span> (<span class="v">$this</span>-><span class="v">level</span>) {
            <span class="k">case</span> <span class="n">1</span>:
                <span class="k">if</span> (<span class="v">$player</span>-><span class="f">getLevel</span>() == <span class="n">2</span> || <span class="v">$fightResult</span>-><span class="f">getTotalVictories</span>() == <span class="n">2</span>) {</pre></div>
<div class="sb">Vop › GameDifficultyContext › __construct()</div>
</div>

<div class="cell" style="left:802px;top:681px">
<div class="tb">design-patterns › src › GameApplication.php</div>
<div class="tabs"><b>ServerCommand.php</b><b class="a">GameApplication.php</b><b>GameDifficultyContext.php</b><b>MediumState.php</b></div>
<div class="side"><div class="sel" style="top:128px"></div><div class="ex"></div><pre>▾ design-patterns
 ▸ _tests
 ▸ bin
 ▸ config
 ▸ public
 ▸ vtoxels
 ▾ src
   ▸ ActionCommand
   ▸ ArmorType
   ▸ AttackType
   ▸ Builder
   ▸ ChainHandler
   ▸ Character
   ▾ Command
      GameCommand.php
      ExtraInfoCommand.php
   ▸ Decorator
   ▾ DifficultyState
      DifficultyStateInterface.php
      EasyState.php
      HardState.php
      MediumState.php
   ▸ Event
   ▸ Observer
   ▸ Printer
   ▸ Service
    Dice.php
    FightResult.php
    FightResultSet.php
    GameApplication.php
</pre></div>
<div class="gut"><pre>28
29
30
31
32
33
34
35
36
37
38
39
40
41
42
43
44
45
46
47</pre></div>
<div class="ed"><pre>    <span class="k">private readonly</span> CharacterBuilder <span class="v">$characterBuilder</span>,
    #[Autowire(<span class="h">service:</span> CasinoHandler::<span class="k">class</span>)]
    <span class="k">private readonly</span> XpBonusHandlerInterface <span class="v">$xpBonusHandler</span>,
) {

    <span class="v">$this</span>-><span class="v">difficultyContext</span> = <span class="k">new</span> GameDifficultyContext();
}

<span class="k">public function</span> <span class="f">play</span>(Character <span class="v">$player</span>, Character <span class="v">$ai</span>, FightResultSet <span class="v">$fightResultSet</span>
{
    <span class="k">while</span> (<span class="k">true</span>) {
        <span class="v" style="background:#3a3d45">$player</span>
        <span class="v">$fightResultSet</span>-><span class="f">addRound</span>();
        GameApplication::<span class="v">$printer</span>-><span class="f">writeln</span>([
            <span class="s">'------------------------'</span>,
            <span class="f">sprintf</span>( <span class="h">format:</span> <span class="s">'ROUND %d'</span>, <span class="v">$fightResultSet</span>-><span class="f">getRounds</span>())
        ], <span class="s">''</span>);

        <span class="c">// Player's turn</span>
        <span class="v">$actionChoice</span> = GameApplication::<span class="v">$printer</span>-><span class="f">choice</span>( <span class="h">question:</span> <span class="s">'Your Turn'</span>, [</pre></div>
<div class="sb">Vop › GameApplication › play()</div>
</div>

<div class="cell term" style="left:1202px;top:681px">
<pre>You've slain <span style="color:#c8c86a">archer</span>


 <span style="color:#5fb04f">[INFO] You earned extra XP thanks to the Level handler</span>



------------------------------
Result: <span style="background:#5fc14a;color:#aef08e">You WON</span>
Total Rounds: 4
Damage dealt: 60
Damage received: 0
Level: 1
XP: 55
Win Streak: 1
Lose Streak: 0
------------------------------

 <span style="color:#5fb04f">Want to keep playing?:</span>
  [<span style="color:#5fb04f">1</span>] Fight!
  [<span style="color:#5fb04f">2</span>] Exit Game
  &gt; <span style="background:#e4e4e4">&#160;</span></pre>
</div>

</body></html>
